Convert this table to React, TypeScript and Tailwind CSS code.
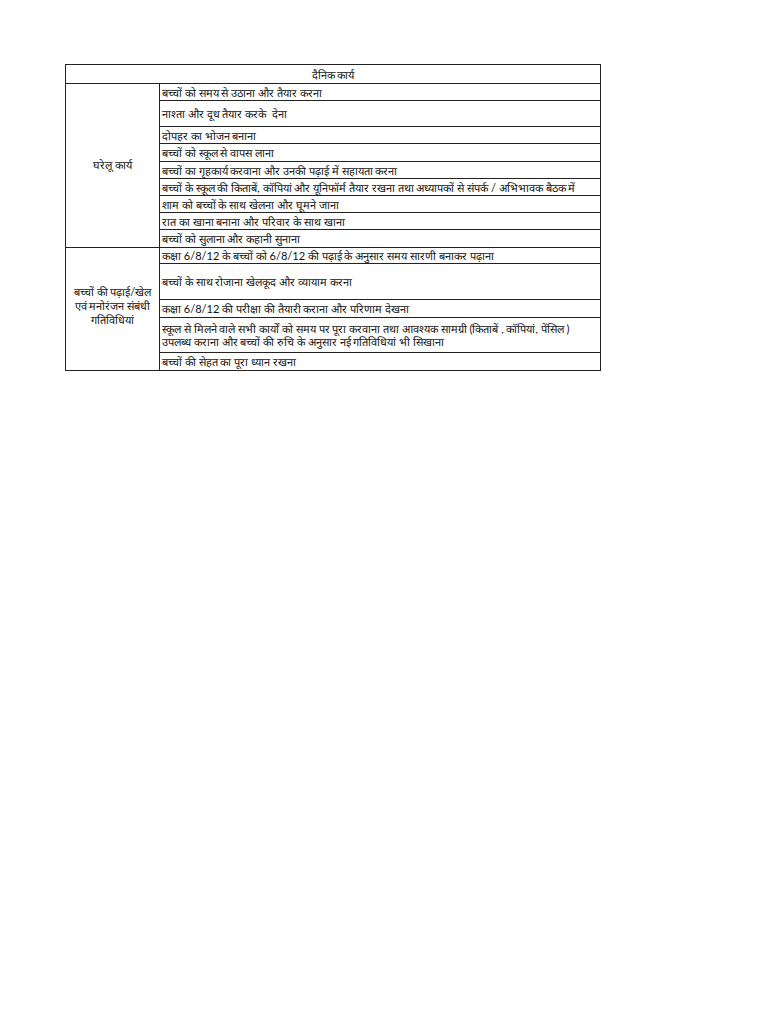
const rowsA: { h: string; text: string }[] = [
  { h: 'h-[17px]', text: 'बच्चों को समय से उठाना और तैयार करना' },
  { h: 'h-[26px]', text: 'नाश्ता और दूध तैयार करके  देना' },
  { h: 'h-[17px]', text: 'दोपहर का भोजन बनाना' },
  { h: 'h-[18px]', text: 'बच्चों को स्कूल से वापस लाना' },
  { h: 'h-[17px]', text: 'बच्चों का गृहकार्य करवाना और उनकी पढ़ाई में सहायता करना' },
  {
    h: 'h-[17px]',
    text: 'बच्चों के स्कूल की किताबें, कॉपियां और यूनिफॉर्म तैयार रखना तथा अध्यापकों से संपर्क / अभिभावक बैठक में',
  },
  { h: 'h-[17px]', text: 'शाम को बच्चों के साथ खेलना और घूमने जाना' },
  { h: 'h-[17px]', text: 'रात का खाना बनाना और परिवार के साथ खाना' },
  { h: 'h-[17px]', text: 'बच्चों को सुलाना और कहानी सुनाना' },
]

const rowsB: { h: string; lines: string[] }[] = [
  { h: 'h-[16px]', lines: ['कक्षा 6/8/12 के बच्चों को 6/8/12 की पढ़ाई के अनुसार समय सारणी बनाकर पढ़ाना'] },
  { h: 'h-[36px]', lines: ['बच्चों के साथ रोजाना खेलकूद और व्यायाम करना'] },
  { h: 'h-[18px]', lines: ['कक्षा 6/8/12 की परीक्षा की तैयारी कराना और परिणाम देखना'] },
  {
    h: 'h-[35px]',
    lines: [
      'स्कूल से मिलने वाले सभी कार्यों को समय पर पूरा करवाना तथा आवश्यक सामग्री (किताबें , कॉपियां, पेंसिल )',
      'उपलब्ध कराना और बच्चों की रुचि के अनुसार नई गतिविधियां भी सिखाना',
    ],
  },
  { h: 'h-[17px]', lines: ['बच्चों की सेहत का पूरा ध्यान रखना'] },
]

function Cell({ h, children, last }: { h: string; children: React.ReactNode; last?: boolean }) {
  return (
    <div
      className={`${h} flex flex-col justify-center overflow-hidden whitespace-pre pl-[2px] ${
        last ? '' : 'border-b border-[#222]'
      }`}
    >
      {children}
    </div>
  )
}

export default function App() {
  return (
    <div className="min-h-[1024px] w-[768px] bg-white pt-[64px] pl-[65px] font-['Lato',sans-serif] text-[11px] leading-[13px] text-[#111]">
      <div className="w-[536px] border border-[#222]">
        <div className="flex h-[19px] items-center justify-center border-b border-[#222]">दैनिक कार्य</div>

        <div className="flex border-b border-[#222]">
          <div className="flex w-[94px] shrink-0 items-center justify-center border-r border-[#222] pb-[3px]">घरेलू कार्य</div>
          <div className="min-w-0 flex-1">
            {rowsA.map((r, i) => (
              <Cell key={i} h={r.h} last={i === rowsA.length - 1}>
                {r.text}
              </Cell>
            ))}
          </div>
        </div>

        <div className="flex">
          <div className="flex w-[94px] shrink-0 flex-col items-center justify-center border-r border-[#222] pb-[6px] leading-[14px]">
            <span>बच्चों की पढ़ाई/खेल</span>
            <span>एवं मनोरंजन संबंधी</span>
            <span>गतिविधियां</span>
          </div>
          <div className="min-w-0 flex-1">
            {rowsB.map((r, i) => (
              <Cell key={i} h={r.h} last={i === rowsB.length - 1}>
                {r.lines.map((l, j) => (
                  <span key={j}>{l}</span>
                ))}
              </Cell>
            ))}
          </div>
        </div>
      </div>
    </div>
  )
}
